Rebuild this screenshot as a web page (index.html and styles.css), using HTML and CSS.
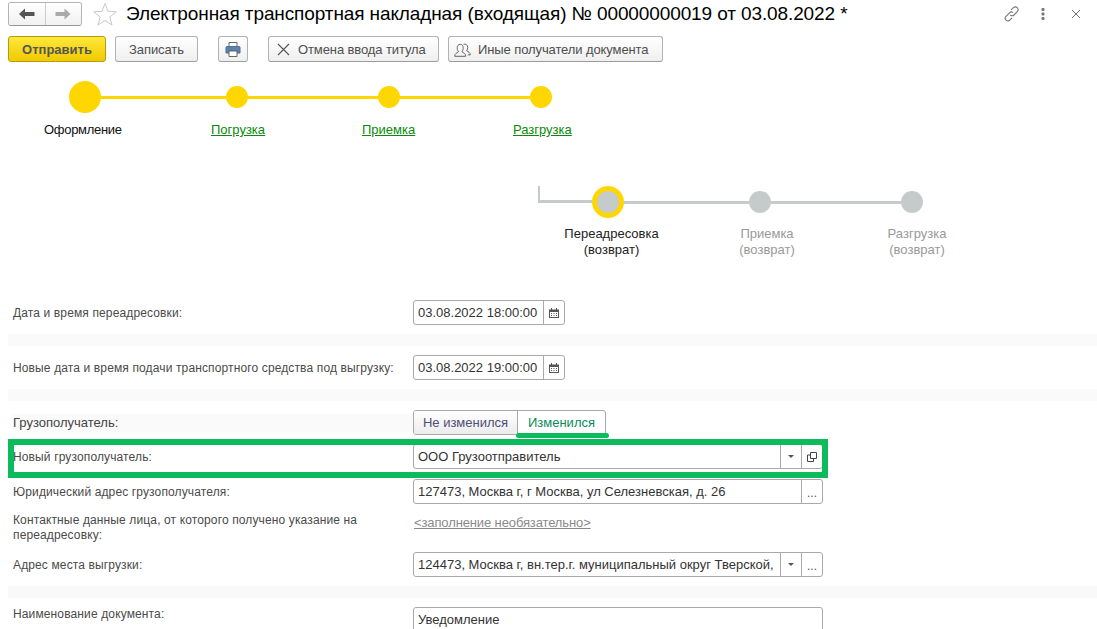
FILE: index.html
```html
<!DOCTYPE html>
<html lang="ru">
<head>
<meta charset="utf-8">
<title>Электронная транспортная накладная</title>
<link rel="stylesheet" href="styles.css">
</head>
<body>
<div class="page">
  <header class="titlebar">
    <div class="nav">
      <button class="nav-btn"><svg width="16" height="12" viewBox="0 0 16 12"><path d="M0 6 6 .5V4h9.500v4H6v3.500z" fill="#555"/></svg></button>
      <button class="nav-btn"><svg width="16" height="12" viewBox="0 0 16 12"><path d="M15.500 6 9.500.5V4H.5v4h9v3.500z" fill="#aaa"/></svg></button>
    </div>
    <svg class="star" width="24" height="24" viewBox="0 0 24 24"><path d="M12 1.500l3 7.800 8.300.5-6.500 5.200 2.200 8-7-4.500-7 4.500 2.200-8L.7 9.800 9 9.300z" fill="#fff" stroke="#c8c8c8"/></svg>
    <h1 class="title">Электронная транспортная накладная (входящая) № 00000000019 от 03.08.2022 *</h1>
    <div class="win-icons">
      <svg width="16" height="16" viewBox="0 0 16 16" fill="none" stroke="#777" stroke-width="1.100"><path d="M7 3.800 9.500 1.700a2.700 2.700 0 0 1 4 3.600L10 9a2.600 2.600 0 0 1-3.700 0"/><path d="M9 6.500a2.600 2.600 0 0 0-3.500.3l-3.700 3.700a2.700 2.700 0 0 0 3.800 3.800l2.500-2.400"/></svg>
      <svg width="4" height="14" viewBox="0 0 4 14" fill="#777"><rect x=".5" y="1" width="3" height="3" rx="1"/><rect x=".5" y="5.500" width="3" height="3" rx="1"/><rect x=".5" y="10" width="3" height="3" rx="1"/></svg>
      <svg width="10" height="10" viewBox="0 0 10 10" stroke="#777" stroke-width="1"><path d="M1 1l8 8M9 1l-8 8"/></svg>
    </div>
  </header>

  <div class="toolbar">
    <button class="btn btn-primary">Отправить</button>
    <button class="btn btn-save">Записать</button>
    <button class="btn btn-print"><svg width="16" height="15" viewBox="0 0 16 15"><path d="M4 .5h8v4H4z" fill="#fff" stroke="#666"/><path d="M1 5.500a1 1 0 0 1 1-1h12a1 1 0 0 1 1 1V11h-3V9H4v2H1z" fill="#5a82ad" stroke="#4a6f98"/><path d="M4 9h8v5.500H4z" fill="#fff" stroke="#666"/></svg></button>
    <button class="btn btn-cancel"><svg width="13" height="13" viewBox="0 0 13 13" stroke="#555" stroke-width="1.100"><path d="M1 1l11 11M12 1 1 12"/></svg>Отмена ввода титула</button>
    <button class="btn btn-others"><svg width="17" height="14" viewBox="0 0 17 14" fill="none" stroke="#666"><path d="M.7 13.300c0-3 2.300-3.300 3.800-4.500-1-1.500-1.300-2.500-1.300-4 0-2.200 1.300-3.500 3-3.500s3 1.300 3 3.500c0 1.500-.3 2.500-1.300 4 1.500 1.200 3.800 1.500 3.800 4.500z"/><path d="M9.500 1.300c2.300-.8 4.200.8 4.200 3.200 0 1.200-.3 2.200-1 3.400 1.400.9 3.600 1.300 3.600 4h-2.500"/></svg>Иные получатели документа</button>
  </div>

  <section class="steps-main">
    <div class="track">
      <span class="dot dot-big"></span><span class="seg seg-a"></span>
      <span class="dot"></span><span class="seg seg-b"></span>
      <span class="dot"></span><span class="seg seg-b"></span>
      <span class="dot"></span>
    </div>
    <div class="step-labels">
      <span class="step-current">Оформление</span>
      <a class="step-link">Погрузка</a>
      <a class="step-link">Приемка</a>
      <a class="step-link">Разгрузка</a>
    </div>
  </section>

  <section class="steps-return">
    <div class="track track-gray">
      <span class="elbow"></span>
      <span class="dot dot-big dot-active"></span><span class="seg seg-a"></span>
      <span class="dot"></span><span class="seg seg-b"></span>
      <span class="dot"></span>
    </div>
    <div class="return-labels">
      <span class="return-current">Переадресовка<br>(возврат)</span>
      <span>Приемка<br>(возврат)</span>
      <span>Разгрузка<br>(возврат)</span>
    </div>
  </section>

  <form class="form">
    <div class="row">
      <label>Дата и время переадресовки:</label>
      <div class="field field-date"><span class="value">03.08.2022 18:00:00</span><span class="cell"><svg width="10" height="10" viewBox="0 0 10 10"><path d="M0 1.500h10V10H0z" fill="#555"/><path d="M2 0h1v2H2zM7 0h1v2H7z" fill="#555"/><path d="M1 4h8v5H1z" fill="#fff"/><path d="M2 5h1v1H2zM4.500 5h1v1h-1zM7 5h1v1H7zM2 7h1v1H2zM4.500 7h1v1h-1zM7 7h1v1H7z" fill="#555"/></svg></span></div>
    </div>
    <div class="band"></div>
    <div class="row">
      <label>Новые дата и время подачи транспортного средства под выгрузку:</label>
      <div class="field field-date"><span class="value">03.08.2022 19:00:00</span><span class="cell"><svg width="10" height="10" viewBox="0 0 10 10"><path d="M0 1.500h10V10H0z" fill="#555"/><path d="M2 0h1v2H2zM7 0h1v2H7z" fill="#555"/><path d="M1 4h8v5H1z" fill="#fff"/><path d="M2 5h1v1H2zM4.500 5h1v1h-1zM7 5h1v1H7zM2 7h1v1H2zM4.500 7h1v1h-1zM7 7h1v1H7z" fill="#555"/></svg></span></div>
    </div>
    <div class="band"></div>
    <div class="row">
      <label class="label-shaded">Грузополучатель:</label>
      <div class="tumbler"><span class="tum tum-off">Не изменился</span><span class="tum tum-on">Изменился</span></div>
    </div>
    <div class="row row-gap">
      <label>Новый грузополучатель:</label>
      <div class="field field-wide"><span class="value">ООО Грузоотправитель</span><span class="cell cell-drop"><i class="tri"></i></span><span class="cell"><svg width="10" height="10" viewBox="0 0 10 10" fill="none" stroke="#444"><path d="M3.500.5h6v6h-6z"/><path d="M3.500 3H.5v6.500H6.500V6.500"/></svg></span></div>
    </div>
    <div class="row row-gap-next">
      <label>Юридический адрес грузополучателя:</label>
      <div class="field field-wide"><span class="value">127473, Москва г, г Москва, ул Селезневская, д. 26</span><span class="cell cell-dots">...</span></div>
    </div>
    <div class="row row-contact">
      <label>Контактные данные лица, от которого получено указание на переадресовку:</label>
      <a class="optional">&lt;заполнение необязательно&gt;</a>
    </div>
    <div class="row">
      <label>Адрес места выгрузки:</label>
      <div class="field field-wide"><span class="value">124473, Москва г, вн.тер.г. муниципальный округ Тверской,</span><span class="cell cell-drop"><i class="tri"></i></span><span class="cell cell-dots">...</span></div>
    </div>
    <div class="band"></div>
    <div class="row">
      <label class="label-top">Наименование документа:</label>
      <div class="field field-wide"><span class="value">Уведомление</span></div>
    </div>
  </form>

  <div class="hl-box"></div>
  <div class="hl-line"></div>
</div>
</body>
</html>
```
FILE: styles.css
```css
* { box-sizing: border-box; }
html, body { margin: 0; padding: 0; background: #fff; }
body { font-family: "Liberation Sans", Arial, sans-serif; font-size: 12px; color: #4a4a4a; }
.page { position: relative; width: 1097px; height: 629px; overflow: hidden; }
button { font-family: inherit; cursor: default; }

.titlebar { display: flex; align-items: center; height: 24px; margin-top: 2px; padding-left: 8px; position: relative; top: 2px; }
.nav { display: flex; width: 74px; height: 24px; border: 1px solid #b4b4b4; border-bottom-color: #999; border-radius: 3px; overflow: hidden; margin-top: -4px; }
.nav-btn { flex: 1; border: 0; padding: 0; background: linear-gradient(#fff, #f1f1f1); display: flex; align-items: center; justify-content: center; }
.nav-btn + .nav-btn { border-left: 1px solid #ccc; }
.star { margin: -4px 0 0 11px; }
.title { margin: -4px 0 0 9px; font-size: 19px; font-weight: 400; color: #000; white-space: nowrap; letter-spacing: -0.11px; }
.win-icons { margin-left: auto; display: flex; align-items: center; margin-top: -4px; padding-right: 16px; }
.win-icons svg:nth-child(1) { margin-right: 21px; }
.win-icons svg:nth-child(2) { margin-right: 26px; }

.toolbar { display: flex; align-items: center; height: 26px; margin-top: 10px; padding-left: 8px; }
.btn { height: 26px; padding: 1px 0 0; border: 1px solid #b2b2b2; border-bottom-color: #9c9c9c; border-radius: 3px; background: linear-gradient(#fff, #efefef); font-size: 13px; letter-spacing: -0.1px; color: #4e4e4e; display: flex; align-items: center; justify-content: center; white-space: nowrap; }
.btn-primary { width: 98px; background: linear-gradient(#ffe83a, #efca00); border-color: #b79a12; font-weight: 700; letter-spacing: 0; color: #555; }
.btn-save { width: 83px; margin-left: 9px; }
.btn-print { width: 30px; margin-left: 20px; }
.btn-cancel { width: 171px; margin-left: 20px; gap: 8px; justify-content: flex-start; padding-left: 8px; }
.btn-others { width: 215px; margin-left: 9px; gap: 7px; justify-content: flex-start; padding-left: 5px; }

.track { display: flex; align-items: center; height: 32px; }
.dot { width: 22px; height: 22px; border-radius: 50%; background: #ffd600; flex: none; }
.dot-big { width: 32px; height: 32px; }
.seg { height: 3px; background: #ffd600; flex: none; }
.seg-a { width: 125px; }
.seg-b { width: 130px; }

.steps-main { margin-top: 19px; }
.steps-main .track { margin-left: 69px; }
.step-labels { display: grid; grid-template-columns: 167px 151px 151px auto; margin: 10px 0 0 44px; line-height: 14px; font-size: 13px; }
.step-current { color: #111; letter-spacing: -0.3px; }
.step-link { color: #0a8a0a; text-decoration: underline; }

.steps-return { margin-top: 49px; }
.track-gray { margin-left: 538px; }
.track-gray .dot { background: #c5cacb; }
.track-gray .seg { background: #c5cacb; }
.track-gray .dot-active { border: 5px solid #ffd600; }
.elbow { width: 54px; height: 17px; align-self: flex-start; border-left: 2px solid #c5cacb; border-bottom: 3px solid #c5cacb; flex: none; }
.return-labels { display: grid; grid-template-columns: 150px 161px 139px; margin: 8px 0 0 536.500px; line-height: 16px; text-align: center; font-size: 13px; color: #999; }
.return-current { color: #222; }

.form { display: flex; flex-direction: column; margin-top: 42px; }
.row { display: grid; grid-template-columns: 400px auto; align-items: center; justify-items: start; padding-left: 13px; height: 25px; flex: none; }
.row label { line-height: 15px; letter-spacing: 0.13px; position: relative; top: 1px; }
.row .label-shaded { background: #fafafa; width: 100%; line-height: 18px; font-size: 13px; letter-spacing: 0; color: #444; top: 0; }
.row .label-top { top: -5px; }
.row-gap { margin-top: 9px; }
.row-gap-next { margin-top: 10px; }
.row-contact { height: 48px; }
.row-contact label { width: 370px; top: 0; }
.band { height: 12px; margin: 9px 0 9px 8px; background: #fafafa; flex: none; }

.field { display: flex; align-items: stretch; height: 25px; border: 1px solid #a9a9a9; border-radius: 3px; background: #fff; color: #333; font-size: 13px; }
.field-date { width: 152px; }
.field-wide { width: 410px; }
.value { flex: 1; padding-left: 4px; line-height: 23px; white-space: nowrap; overflow: hidden; }
.cell { width: 21px; border-left: 1px solid #a9a9a9; display: flex; align-items: center; justify-content: center; flex: none; }
.cell-dots { color: #555; align-items: flex-end; line-height: 20px; font-size: 12px; }
.tri { width: 0; height: 0; border: 3px solid transparent; border-top: 3px solid #555; border-bottom: 0; }

.tumbler { display: flex; height: 25px; border: 1px solid #a9a9a9; border-radius: 3px; width: 193px; overflow: hidden; font-size: 13px; }
.tum { display: flex; align-items: center; justify-content: center; }
.tum-off { width: 103px; background: linear-gradient(#fff, #ececec); color: #4e4e78; }
.tum-on { flex: 1; border-left: 1px solid #a9a9a9; color: #0a8a5a; }
.optional { color: #8a8a8a; text-decoration: underline; font-size: 13px; letter-spacing: -0.12px; margin: -11px 0 0 1px; }

.hl-box { position: absolute; left: 8px; top: 439px; width: 820px; height: 39px; border: 6px solid #0dbb5c; }
.hl-line { position: absolute; left: 516px; top: 433px; width: 93px; height: 5px; border-radius: 3px; background: #0dbb5c; }
```
